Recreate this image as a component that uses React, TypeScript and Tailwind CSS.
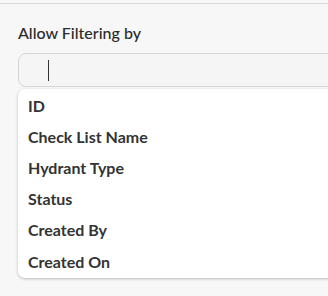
import React from "react";

const items = ["ID", "Check List Name", "Hydrant Type", "Status", "Created By", "Created On"];

export default function App() {
  return (
    <div className="w-[328px] h-[296px] overflow-hidden bg-[#f7f7f7] pt-[3px]" style={{ fontFamily: "Lato, 'Liberation Sans', sans-serif" }}>
      <div className="h-[1px] bg-[#d9d9d9]" />
      <div className="pl-[18px] pt-[17px]">
        <div className="text-[16px] leading-[24px] font-medium text-[#2b2b2b]">Allow Filtering by</div>
        <div className="mt-[8px] h-[34px] w-[330px] rounded-[8px] border border-[#d6d6d6] bg-[#f5f5f5] flex items-center pl-[29px]">
          <div className="w-[1px] h-[21px] bg-[#333]" />
        </div>
        <div className="mt-[2px] w-[330px] rounded-[7px] bg-white shadow-[0_1px_3px_rgba(0,0,0,0.25)] pt-[1px] pb-[1px]">
          {items.map((t) => (
            <div key={t} className="h-[31.2px] flex items-center pl-[10px] text-[16px] font-bold text-[#333]">
              {t}
            </div>
          ))}
        </div>
      </div>
    </div>
  );
}
